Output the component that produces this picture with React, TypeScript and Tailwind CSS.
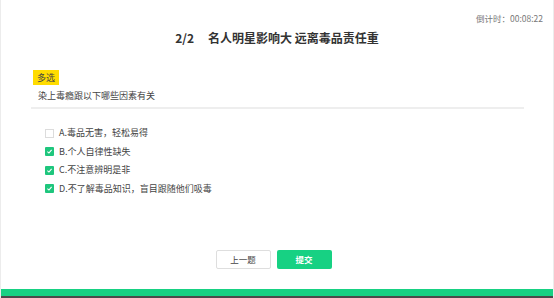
const OPTIONS = [
  { key: "A", text: "毒品无害，轻松易得", checked: false },
  { key: "B", text: "个人自律性缺失", checked: true },
  { key: "C", text: "不注意辨明是非", checked: true },
  { key: "D", text: "不了解毒品知识，盲目跟随他们吸毒", checked: true },
];

function Box({ checked }: { checked: boolean }) {
  if (!checked) {
    return <span className="h-[9px] w-[9px] shrink-0 border border-[#dcdcdc] bg-white" />;
  }
  return (
    <span className="flex h-[9px] w-[9px] shrink-0 items-center justify-center rounded-[1px] bg-[#1ec67d]">
      <svg viewBox="0 0 10 10" className="h-[7px] w-[7px]" aria-hidden>
        <path d="M2 5.2 L4.2 7.2 L8 2.8" fill="none" stroke="#fff" strokeWidth="1.6" />
      </svg>
    </span>
  );
}

export default function App() {
  return (
    <div
      className="flex h-[298px] w-[554px] flex-col overflow-hidden border-x border-[#ececec] bg-white text-[#333]"
      style={{ fontFamily: '"Noto Sans CJK SC", "Liberation Sans", sans-serif' }}
    >
      {/* timer */}
      <div className="flex justify-end pr-[10px] pt-[12px] text-[8.5px] leading-[12px] text-[#777]">
        倒计时：00:08:22
      </div>

      {/* title */}
      <h1 className="mt-[5px] text-center text-[12px] font-bold leading-[18px] text-[#333]">
        2/2<span className="inline-block w-[14px]" />名人明星影响大 远离毒品责任重
      </h1>

      {/* question */}
      <div className="ml-[30px] mt-[23px]">
        <div className="ml-[2px] flex h-[15px] w-[26px] items-center justify-center bg-[#ffdc00] text-[9px] text-[#444]">
          多选
        </div>
        <p className="mt-[4px] pl-[7px] text-[9px] leading-[14px] text-[#444]">
          染上毒瘾跟以下哪些因素有关
        </p>
        <div className="mt-[4px] h-[2px] w-[493px] bg-[#eeeeee]" />
      </div>

      {/* options */}
      <div className="ml-[44px] mt-[17px] flex flex-col gap-[4.5px]">
        {OPTIONS.map((o) => (
          <label key={o.key} className="flex h-[14px] items-center gap-[5px] text-[9px] text-[#444]">
            <Box checked={o.checked} />
            <span>
              {o.key}.{o.text}
            </span>
          </label>
        ))}
      </div>

      {/* buttons */}
      <div className="mt-auto flex justify-center gap-[6px] pb-[20px] pr-[7px]">
        <button className="h-[19px] w-[55px] rounded-[2px] border border-[#dedede] bg-white text-[8.5px] text-[#444]">
          上一题
        </button>
        <button className="h-[19px] w-[55px] rounded-[2px] bg-[#17d183] text-[8.5px] font-bold text-white">
          提交
        </button>
      </div>

      {/* bottom bar */}
      <div className="h-[7px] shrink-0 bg-[#17d183]" />
      <div className="h-[2px] shrink-0 bg-[#4a4a4a]" />
    </div>
  );
}
